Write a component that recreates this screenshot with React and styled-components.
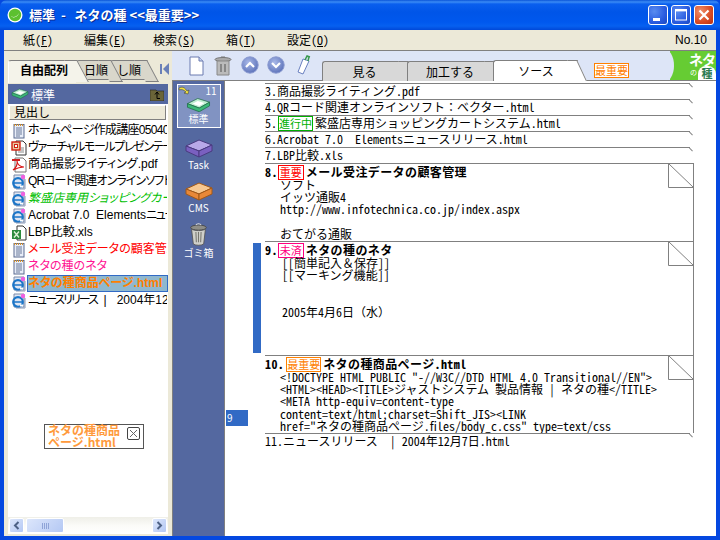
import React from "react";
import styled, { createGlobalStyle } from "styled-components";

const Global = createGlobalStyle`
  html, body { margin: 0; padding: 0; width: 720px; height: 540px; overflow: hidden; background: #fff; }
  * { box-sizing: border-box; }
  body { font-family: "Noto Sans CJK JP", "Liberation Sans", sans-serif; font-size: 12px; color: #000; }
`;

const Frame = styled.div`
  width: 720px; height: 540px; display: flex; flex-direction: column;
  background: #0548e0; padding: 0 4px 4px; 
`;
const TitleBar = styled.div`
  height: 30px; margin: 0 -4px; padding: 0 6px 0 7px; display: flex; align-items: center; gap: 5px;
  border-radius: 7px 7px 0 0;
  background: linear-gradient(180deg, #0a55d8 0, #3b8cf5 2px, #0a5fee 4px, #0055e8 12px, #0058ee 22px, #0660f0 26px, #0048d8 30px);
`;
const TitleText = styled.div`
  flex: 1; color: #fff; font-weight: 700; font-size: 13px; line-height: 30px; padding-left: 1px;
  text-shadow: 1px 1px 0 #0a2a90; white-space: pre;
`;
const WinButtons = styled.div`display: flex; gap: 3px; padding-top: 0; margin-right: 0;`;
const WinBtn = styled.div`
  width: 20px; height: 20px; border: 1px solid #fff; border-radius: 3px;
  display: flex; align-items: center; justify-content: center;
  background: ${p => p.$red ? "radial-gradient(circle at 30% 30%, #f0906a, #d84a22 60%, #b83010)" : "radial-gradient(circle at 30% 30%, #5a8cf0, #2a5ce0 60%, #1a48c0)"};
`;
const MenuBar = styled.div`
  height: 21px; background: #ece9d8; border-bottom: 1px solid #808080; display: flex; align-items: center;
  padding: 0 10px 0 0; position: relative;
`;
const MenuItem = styled.span`
  width: ${p => p.$w}px; margin-left: ${p => p.$ml}px; line-height: 18px; white-space: pre; font-size: 12px;
  font-feature-settings: "hwid";
  u { text-underline-offset: 1px; }
`;
const MenuNo = styled.span`margin-left: auto; margin-right: -1px; font-size: 12px; font-family: "Liberation Sans", sans-serif;`;
const Body = styled.div`flex: 1; min-height: 0; display: flex; background: #fff;`;

const LeftPanel = styled.div`
  width: 168px; background: #ece9d8; display: flex; flex-direction: column; border-right: 0;
`;
const LeftTabs = styled.div`
  height: 32px; padding: 9px 0 0 4px; display: flex; align-items: stretch; position: relative;
`;
const LTab = styled.div`
  position: relative; width: ${p => p.$w}px; height: ${p => p.$active ? 23 : 20}px; z-index: ${p => p.$z};
  border-top: 1px solid #808080; border-left: 1px solid ${p => p.$active ? "#fff" : "#808080"};
  background: ${p => p.$active ? "#f4f3ea" : "#d9d7cb"};
  font-weight: ${p => p.$active ? 700 : 400}; font-size: 12px; line-height: 17px; padding-left: ${p => p.$pad}px; white-space: nowrap;
  border-radius: 3px 0 0 0;
  ${p => p.$active ? "" : "border-bottom: 1px solid #808080;"}
  &::after {
    content: ""; position: absolute; top: -1px; right: -7px; width: 12px; height: ${p => p.$active ? 21 : 20}px;
    background: inherit; border-top: 1px solid #808080; border-right: 1px solid #808080;
    ${p => p.$active ? "" : "border-bottom: 1px solid #808080;"}
    transform: skewX(28deg); z-index: -1;
  }
`;
const Collapse = styled.div`position: absolute; right: 2px; top: 10px; width: 10px; height: 12px;`;
const ListFrame = styled.div`
  flex: 1; min-height: 0; margin: 1px 4px 2px; display: flex; flex-direction: column; background: #fff; position: relative;
`;
const FolderHead = styled.div`
  height: 20px; background: #5468a0; color: #fff; display: flex; align-items: center; gap: 2px; padding: 0 4px 0 3px; font-size: 12px;
  span { flex: 1; }
`;
const ColHead = styled.div`
  height: 15px; background: #ece9d8; margin: 1px 2px 0 1px; border-right: 1px solid #808080; border-bottom: 1px solid #808080;
  border-top: 1px solid #fff; border-left: 1px solid #fff; padding-left: 4px; line-height: 12px; font-size: 12px;
`;
const FileList = styled.div`flex: 1; min-height: 0; padding-top: 2px; overflow: hidden;`;
const FileRow = styled.div`
  height: 17px; display: flex; align-items: center; gap: 0; padding-left: 3px; white-space: nowrap;
`;
const FileName = styled.div`
  flex: 1; min-width: 0; overflow: hidden; height: 17px; line-height: 15px; font-size: 12px; white-space: pre;
  font-family: "Liberation Sans", "Noto Sans CJK JP", sans-serif; font-feature-settings: "palt";
  letter-spacing: ${p => p.$ls || 0}px;
  color: ${p => p.$c || "#000"}; font-style: ${p => p.$it ? "italic" : "normal"}; font-weight: ${p => p.$b ? 700 : 400};
  border: 1px solid ${p => p.$sel ? "#316ac5" : "transparent"}; background: ${p => p.$sel ? "#8fb8cf" : "transparent"};
`;
const Kana = styled.span`letter-spacing: ${p => p.$ls}px;`;
const DragLabel = styled.div`
  position: absolute; left: 36px; top: 340px; width: 100px; height: 25px; border: 1px solid #555; background: #fff;
  color: #ff9a3c; font-weight: 700; font-size: 12px; line-height: 12px; padding: 0 0 0 3px;
`;
const DragText = styled.div`margin-top: -1px;`;
const DragClose = styled.div`
  position: absolute; right: 3px; top: 2px; width: 13px; height: 13px; border: 1px solid #444; border-radius: 2px;
`;
const ScrollBar = styled.div`
  height: 17px; display: flex; gap: 1px; padding: 0 1px; align-items: center;
  background: linear-gradient(180deg, #efefe8, #fbfbf8 50%, #fff);
`;
const ScrollBtn = styled.div`
  width: 15px; height: 15px; border: 1px solid #fff; border-radius: 2px;
  background: linear-gradient(135deg, #dce6fb, #b4c8f4); display: flex; align-items: center; justify-content: center;
`;
const ScrollThumb = styled(ScrollBtn)`width: 38px; gap: 1px; margin-left: 1px;`;
const Grip = styled.i`display: block; width: 1px; height: 6px; background: #8fa4d8;`;
const ScrollTrack = styled.div`flex: 1;`;

const Strip = styled.div`
  width: 53px; background: #5468a0; border-left: 1px solid #808080; border-right: 1px solid #808080;
  display: flex; flex-direction: column; align-items: center; padding-top: 33px; margin-left: 0;
`;
const ShelfItem = styled.div`
  position: relative; width: 44px; height: 44px; display: flex; flex-direction: column; align-items: center; justify-content: flex-end;
  color: #fff; font-size: 10px; line-height: 13px; padding-bottom: ${p => p.$pb ?? 2}px; margin-bottom: ${p => p.$mb}px;
  ${p => p.$sel ? "background: #8193c2; border: 1px solid #fff;" : ""}
`;
const ShelfCount = styled.span`position: absolute; right: 3px; top: 0; font-size: 10px; line-height: 12px; color: #fff;`;
const ShelfArrow = styled.div`position: absolute; left: 0; top: 1px; line-height: 0;`;

const Main = styled.div`flex: 1; min-width: 0; display: flex; flex-direction: column; background: #fff;`;
const ToolBar = styled.div`
  height: 30px; background: #dde5f7; display: flex; align-items: flex-start; padding-left: 16px; position: relative; border-bottom: 1px solid #808080; margin-left: -53px; 
`;
const ToolIcon = styled.div`width: ${p => p.$w}px; margin-right: ${p => p.$mr}px; margin-top: ${p => p.$mt}px; line-height: 0;`;
const MainTab = styled.div`
  position: relative; width: ${p => p.$w}px; height: ${p => p.$active ? 21 : 20}px; margin-top: ${p => p.$active ? 9 : 10}px; z-index: ${p => p.$active ? 3 : 1};
  background: ${p => p.$active ? "#fff" : "#d8d8d8"}; border-top: 1px solid #808080; border-left: 1px solid #808080;
  border-radius: 3px 0 0 0; text-align: center; line-height: 19px; font-size: 12px; margin-right: 1px;
  &::after {
    content: ""; position: absolute; top: -1px; right: -4px; width: 9px; height: ${p => p.$active ? 20 : 19}px; background: inherit;
    border-top: 1px solid #808080; border-right: 1px solid #808080; transform: skewX(${p => p.$active ? 25 : 10}deg); z-index: -1;
  }
`;
const TabBadgeWrap = styled.div`margin: 10px 0 0 15px;`;
const Logo = styled.div`
  position: absolute; right: 0; top: 0; width: 46px; height: 29px; background: #66cc33; overflow: hidden;
  color: #fff; font-weight: 700;
  &::before {
    content: ""; position: absolute; left: -16px; top: -2px; width: 20px; height: 33px; border-radius: 50%; background: #dde5f7;
  }
`;
const LogoTop = styled.span`position: absolute; left: 19px; top: 1px; font-size: 14px; line-height: 14px; white-space: nowrap; letter-spacing: -1px;`;
const LogoNo = styled.span`position: absolute; left: 20px; top: 17px; font-size: 7px; line-height: 8px; font-weight: 400;`;
const LogoSeed = styled.span`
  position: absolute; left: 28px; top: 15px; width: 18px; height: 14px; border-radius: 8px 8px 0 0; background: #fff; color: #2a7a50;
  font-size: 11px; line-height: 15px; text-align: center;
`;

const Doc = styled.div`display: flex; flex: 1; min-height: 0; background: #fff;`;
const Gutter = styled.div`width: 28px; padding-left: 1px;`;
const PosTag = styled.div`
  margin-top: 329px; width: 22px; height: 16px; background: #316ac5; color: #fff; font-size: 10px; line-height: 16px; padding-left: 1px;
`;
const Notes = styled.div`
  width: 441px; padding-top: 2px; font-size: 12px; line-height: 12px; font-feature-settings: "hwid";
`;
const NoteRow = styled.div`display: flex; align-items: stretch;`;
const Marker = styled.div`width: 8px; margin: 2px 4px 2px 0; background: ${p => p.$on ? "#316ac5" : "transparent"};`;
const Line = styled.div`
  position: relative; width: 425px; height: 16px; border-top: 1px solid #808080; line-height: 13px; white-space: pre; display: flex; align-items: flex-start;
  &::after {
    content: ""; position: absolute; right: -4px; top: -1px; width: 5px; height: 1px; background: #808080; transform-origin: left center; transform: rotate(45deg);
  }
`;
const Card = styled.div`
  position: relative; width: 430px; height: ${p => p.$h}px; border-top: 1px solid #808080; border-right: 1px solid #808080; overflow: hidden;
`;
const Fold = styled.svg`position: absolute; right: -1px; top: -1px; display: block;`;
const CardTitle = styled.div`display: flex; align-items: center; height: 15px; font-weight: 700; white-space: pre; font-size: 12px; letter-spacing: 0.4px;`;
const CardBody = styled.div`padding-left: ${p => p.$pl}px; white-space: pre; line-height: 12.2px; font-size: 12px;`;
const Full = styled.span`font-feature-settings: "hwid" 0;`;
const Badge = styled.span`
  display: inline-block; flex: none; height: 15px; line-height: 13px; border: 1px solid ${p => p.$c}; color: ${p => p.$c}; font-size: 11px; font-weight: 400; padding: 0 ${p => p.$p ?? 0}px; background: #fff;
  margin: ${p => p.$m || "0"}; letter-spacing: 0;
`;

const Notepad = () => (
  <svg width="16" height="16" viewBox="0 0 16 16">
    <rect x="3" y="1.5" width="10" height="13.5" fill="#e8edf8" stroke="#5a6a90" />
    <path d="M3 2 h10" stroke="#d09030" strokeWidth="2" strokeDasharray="1 1" />
    <path d="M5 5h6M5 7h6M5 9h6M5 11h6M5 13h4" stroke="#6a7a9a" />
  </svg>
);
const PptIcon = () => (
  <svg width="16" height="16" viewBox="0 0 16 16">
    <path d="M5 1h7l3 3v11H5z" fill="#fff" stroke="#333" />
    <rect x="1" y="2" width="8" height="8" fill="#e8c8a0" stroke="#d02010" strokeWidth="1.4" />
    <rect x="3.5" y="4.5" width="3" height="3" fill="#fff" stroke="#d02010" />
    <path d="M10 8h3M10 10h3M7 12h6" stroke="#888" />
  </svg>
);
const PdfIcon = () => (
  <svg width="16" height="16" viewBox="0 0 16 16">
    <path d="M4 1h8l3 3v11H4z" fill="#fff" stroke="#777" />
    <path d="M1 2h8v2H1z" fill="#d02020" />
    <path d="M2 13c3-2 5-6 4-9 0 3 3 6 7 6-4 0-7 1-11 3z" fill="none" stroke="#d81818" strokeWidth="1.2" />
  </svg>
);
const IeIcon = () => (
  <svg width="16" height="16" viewBox="0 0 16 16">
    <path d="M3 1h10v13H3z" fill="#dfe6f4" stroke="#7a8aa8" />
    <circle cx="7" cy="9" r="4.8" fill="none" stroke="#1c76c8" strokeWidth="2.2" />
    <path d="M2.8 9h8.5" stroke="#1c76c8" strokeWidth="1.5" />
    <path d="M9 12.5h3" stroke="#fff" strokeWidth="2" />
    <circle cx="12" cy="3" r="2.2" fill="#f060e0" />
    <path d="M14 5v10H5" stroke="#8a9ab8" fill="none" />
  </svg>
);
const XlsIcon = () => (
  <svg width="16" height="16" viewBox="0 0 16 16">
    <path d="M6 1h6l3 3v11H6z" fill="#fff" stroke="#333" />
    <path d="M1 5h9v9H1z" fill="#2c8a3c" />
    <path d="M3 6.5l5 6M8 6.5l-5 6" stroke="#dff0d8" strokeWidth="1.4" />
  </svg>
);
const icons = { note: Notepad, ppt: PptIcon, pdf: PdfIcon, ie: IeIcon, xls: XlsIcon };

const Tray = ({ w = 34 }) => (
  <svg width={w} height={w * 0.62} viewBox="0 0 34 21">
    <path d="M2 9l14-7 16 5-14 8z" fill="#bfeed2" stroke="#1c6a44" />
    <path d="M2 9v5l16 6 14-8V7l-14 8z" fill="#3cb878" stroke="#1c6a44" />
    <path d="M9 9l7-3.5 9 2.7-7 4z" fill="#fff" />
  </svg>
);
const BoxIcon = ({ top, side, dark }) => (
  <svg width="28" height="20" viewBox="0 0 28 20">
    <path d="M1 8l13-6 13 5-13 6z" fill={top} stroke={dark} />
    <path d="M1 8v5l13 6v-6z" fill={side} stroke={dark} />
    <path d="M27 7v6l-13 6v-6z" fill={side} stroke={dark} />
  </svg>
);
const Trash = () => (
  <svg width="19" height="23" viewBox="0 0 22 26">
    <ellipse cx="11" cy="5" rx="9" ry="3" fill="#8e8e88" stroke="#444" />
    <path d="M8 2c1-2 5-2 6 0" fill="none" stroke="#ddd" strokeWidth="1.2" />
    <path d="M3 7l2 17c3 2 9 2 12 0l2-17c-4 2-12 2-16 0z" fill="#cfd0ca" stroke="#555" />
    <path d="M8 10l.5 12M11 10v12M14 10l-.5 12" stroke="#77776f" strokeWidth="1.2" />
  </svg>
);
const Circle = ({ up }) => (
  <svg width="18" height="18" viewBox="0 0 18 18">
    <defs>
      <radialGradient id={up ? "gu" : "gd"} cx="40%" cy="35%" r="70%">
        <stop offset="0" stopColor="#a8b8e8" /><stop offset="1" stopColor="#5a70b8" />
      </radialGradient>
    </defs>
    <circle cx="9" cy="9" r="8.2" fill={`url(#${up ? "gu" : "gd"})`} stroke="#8a9ad0" />
    <path d={up ? "M5 11l4-4 4 4" : "M5 7l4 4 4-4"} fill="none" stroke="#fff" strokeWidth="2.2" />
  </svg>
);
const FoldMark = () => (
  <Fold width="26" height="26" viewBox="0 0 26 26">
    <path d="M1 0L26 26V0z" fill="#fff" />
    <path d="M0.5 0V24.5H25.5L0.5 0.5" fill="#fff" stroke="#808080" />
  </Fold>
);

const files = [
  { i: "note", t: "ホームページ作成講座050407", ls: -0.7 },
  { i: "ppt", t: "ヴァーチャルモールプレゼンテーション", ls: -1.4 },
  { i: "pdf", t: "商品撮影ライティング.pdf" },
  { i: "ie", t: "QRコード関連オンラインソフト：ベクター.html", ls: -0.9 },
  { i: "ie", t: "繁盛店専用ショッピングカートシステム.html", c: "#00c000", it: 1 },
  { i: "ie", k0: "Acrobat 7.0  Elements", k: "ニュースリリース.html", kls: -1.5 },
  { i: "xls", t: "LBP比較.xls" },
  { i: "note", t: "メール受注データの顧客管理", c: "#ff0000" },
  { i: "note", t: "ネタの種のネタ", c: "#ff1493" },
  { i: "ie", t: "ネタの種商品ページ.html", c: "#ff7f00", b: 1, sel: 1 },
  { i: "ie", k: "ニュースリリース", kls: -2, t: "  |   2004年12月7日.html" },
];

export default function App() {
  return (
    <Frame>
      <Global />
      <TitleBar>
        <svg width="16" height="16" viewBox="0 0 16 16">
          <circle cx="8" cy="8" r="7.5" fill="#fff" />
          <circle cx="8" cy="8" r="6.2" fill="#5cc030" />
          <path d="M4 9c2 2 6 1 8-3-1 4-6 6-8 3z" fill="#fff" />
        </svg>
        <TitleText>{"標準  -   ネタの種 <<最重要>>"}</TitleText>
        <WinButtons>
          <WinBtn><svg width="14" height="14"><rect x="2" y="10" width="7" height="3" fill="#fff" /></svg></WinBtn>
          <WinBtn><svg width="14" height="14"><rect x="1.5" y="2" width="11" height="10" fill="none" stroke="#fff" /><rect x="1" y="1" width="12" height="2.4" fill="#fff" /></svg></WinBtn>
          <WinBtn $red><svg width="14" height="14"><path d="M2.5 2.5l9 9M11.5 2.5l-9 9" stroke="#fff" strokeWidth="2.2" /></svg></WinBtn>
        </WinButtons>
      </TitleBar>
      <MenuBar>
        <MenuItem $ml={19} $w={26}>紙(<u>F</u>)</MenuItem>
        <MenuItem $ml={35} $w={38}>編集(<u>E</u>)</MenuItem>
        <MenuItem $ml={31} $w={38}>検索(<u>S</u>)</MenuItem>
        <MenuItem $ml={35} $w={26}>箱(<u>T</u>)</MenuItem>
        <MenuItem $ml={35} $w={40}>設定(<u>O</u>)</MenuItem>
        <MenuNo>No.10</MenuNo>
      </MenuBar>
      <Body>
        <LeftPanel>
          <LeftTabs>
            <LTab $w={68} $active $z={3} $pad={11}>自由配列</LTab>
            <LTab $w={34} $z={2} $pad={7}>日順</LTab>
            <LTab $w={36} $z={1} $pad={6}>し順</LTab>
            <Collapse>
              <svg width="10" height="12" viewBox="0 0 10 12"><rect x="0" y="1" width="2" height="10" fill="#6a80b8" /><path d="M9 0v12L3 6z" fill="#6a80b8" /></svg>
            </Collapse>
          </LeftTabs>
          <ListFrame>
            <FolderHead>
              <Tray w={18} />
              <span>標準</span>
              <svg width="14" height="13" viewBox="0 0 14 13"><path d="M0 2h6l1 1h7v10H0z" fill="#6a6438" stroke="#222" strokeWidth=".6" /><path d="M7 4.5v6h3M5 6.5l2-2.5 2 2.5" fill="none" stroke="#000" /></svg>
            </FolderHead>
            <ColHead>見出し</ColHead>
            <FileList>
              {files.map((f, n) => {
                const I = icons[f.i];
                return (
                  <FileRow key={n}>
                    <I />
                    <FileName $c={f.c} $it={f.it} $b={f.b} $sel={f.sel} $ls={f.ls}>
                      {f.k0}{f.k ? <Kana $ls={f.kls}>{f.k}</Kana> : null}{f.t}
                    </FileName>
                  </FileRow>
                );
              })}
            </FileList>
            <DragLabel>
              <DragText>ネタの種商品<br />ページ.html</DragText>
              <DragClose>
                <svg width="11" height="11" style={{ display: "block" }}><path d="M2 2l7 7M9 2l-7 7" stroke="#666" /></svg>
              </DragClose>
            </DragLabel>
            <ScrollBar>
              <ScrollBtn><svg width="9" height="9"><path d="M6.5 1L3 4.5 6.5 8" fill="none" stroke="#4d6185" strokeWidth="2" /></svg></ScrollBtn>
              <ScrollThumb><Grip /><Grip /><Grip /><Grip /></ScrollThumb>
              <ScrollTrack />
              <ScrollBtn><svg width="9" height="9"><path d="M2.5 1L6 4.5 2.5 8" fill="none" stroke="#4d6185" strokeWidth="2" /></svg></ScrollBtn>
            </ScrollBar>
          </ListFrame>
        </LeftPanel>
        <Strip>
          <ShelfItem $sel $mb={1}>
            <ShelfArrow><svg width="14" height="9" viewBox="0 0 14 9"><path d="M1 2c4-2 6 0 8 3l2-1-1 4-4-1 2-1c-2-2-4-3-7-2z" fill="#f0e040" stroke="#333" strokeWidth=".5" /></svg></ShelfArrow>
            <ShelfCount>11</ShelfCount>
            <Tray w={25} />
            標準
          </ShelfItem>
          <ShelfItem $mb={0}><BoxIcon top="#b8a8e8" side="#7a60c0" dark="#4a3a80" />Task</ShelfItem>
          <ShelfItem $mb={1} $pb={3}><BoxIcon top="#f8c890" side="#e88838" dark="#a05818" />CMS</ShelfItem>
          <ShelfItem $pb={3}><Trash />ゴミ箱</ShelfItem>
        </Strip>
        <Main>
          <ToolBar>
            <ToolIcon $w={17} $mr={9} $mt={5}>
              <svg width="17" height="20" viewBox="0 0 17 20"><path d="M2 1h9l4 4v14H2z" fill="#fff" stroke="#6a7ab0" /><path d="M11 1v4h4" fill="#c8d4f0" stroke="#6a7ab0" /></svg>
            </ToolIcon>
            <ToolIcon $w={18} $mr={9} $mt={4}>
              <svg width="18" height="21" viewBox="0 0 18 21"><ellipse cx="9" cy="4.5" rx="8" ry="2" fill="#aaa" stroke="#777" /><path d="M7 2h4" stroke="#777" /><path d="M3 6h12v14H3z" fill="#bbb" stroke="#888" /><path d="M7 9v8M11 9v8" stroke="#777" strokeWidth="1.5" /></svg>
            </ToolIcon>
            <ToolIcon $w={18} $mr={8} $mt={5}><Circle up /></ToolIcon>
            <ToolIcon $w={18} $mr={11} $mt={5}><Circle /></ToolIcon>
            <ToolIcon $w={16} $mr={10} $mt={4}>
              <svg width="16" height="20" viewBox="0 0 16 20"><path d="M7 4l6 2-6 13-5-2z" fill="#fff" stroke="#6a80c0" /><path d="M9 5l2-4 2 1-1 4M11 1l3 1" fill="none" stroke="#3a9a50" strokeWidth="1.5" /></svg>
            </ToolIcon>
            <MainTab $w={84}>見る</MainTab>
            <MainTab $w={85}>加工する</MainTab>
            <MainTab $w={85} $active>ソース</MainTab>
            <TabBadgeWrap><Badge $c="#ff8000">最重要</Badge></TabBadgeWrap>
            <Logo>
              <LogoTop>ネタ</LogoTop>
              <LogoNo>の</LogoNo>
              <LogoSeed>種</LogoSeed>
            </Logo>
          </ToolBar>
          <Doc>
            <Gutter><PosTag>9</PosTag></Gutter>
            <Notes>
              <NoteRow><Marker /><Line>3.商品撮影ライティング.pdf</Line></NoteRow>
              <NoteRow><Marker /><Line>4.QRコード関連オンラインソフト<Full>：</Full>ベクター.html</Line></NoteRow>
              <NoteRow><Marker /><Line>5.<Badge $c="#00b000" $m="0 2px 0 1px">進行中</Badge>繁盛店専用ショッピングカートシステム.html</Line></NoteRow>
              <NoteRow><Marker /><Line>6.Acrobat 7.0  Elementsニュースリリース.html</Line></NoteRow>
              <NoteRow><Marker /><Line>7.LBP比較.xls</Line></NoteRow>
              <NoteRow>
                <Marker />
                <Card $h={78}>
                  <FoldMark />
                  <CardTitle>8.<Badge $c="#ff0000" $p={1} $m="2px 2px 0 0">重要</Badge>メール受注データの顧客管理</CardTitle>
                  <CardBody $pl={15}>{"ソフト\nイッツ通販4\nhttp://www.infotechnica.co.jp/index.aspx\n\nおてがる通販"}</CardBody>
                </Card>
              </NoteRow>
              <NoteRow>
                <Marker $on />
                <Card $h={114}>
                  <FoldMark />
                  <CardTitle>9.<Badge $c="#ff0080" $p={1} $m="2px 2px 0 0">未済</Badge>ネタの種のネタ</CardTitle>
                  <CardBody $pl={17}>[[簡単記入<Full>＆</Full>保存]]{"\n"}[[マーキング機能]]{"\n\n\n"}2005年4月6日<Full>（水）</Full></CardBody>
                </Card>
              </NoteRow>
              <NoteRow>
                <Marker />
                <Card $h={78}>
                  <FoldMark />
                  <CardTitle>10.<Badge $c="#ff8000" $m="2px 2px 0 2px">最重要</Badge>ネタの種商品ページ.html</CardTitle>
                  <CardBody $pl={15}>{"<!DOCTYPE HTML PUBLIC \"-//W3C//DTD HTML 4.0 Transitional//EN\">\n<HTML><HEAD><TITLE>ジャストシステム 製品情報 | ネタの種</TITLE>\n<META http-equiv=content-type\ncontent=text/html;charset=Shift_JIS><LINK\nhref=\"ネタの種商品ページ.files/body_c.css\" type=text/css"}</CardBody>
                </Card>
              </NoteRow>
              <NoteRow><Marker /><Line>{"11.ニュースリリース  | 2004年12月7日.html"}</Line></NoteRow>
            </Notes>
          </Doc>
        </Main>
      </Body>
    </Frame>
  );
}
